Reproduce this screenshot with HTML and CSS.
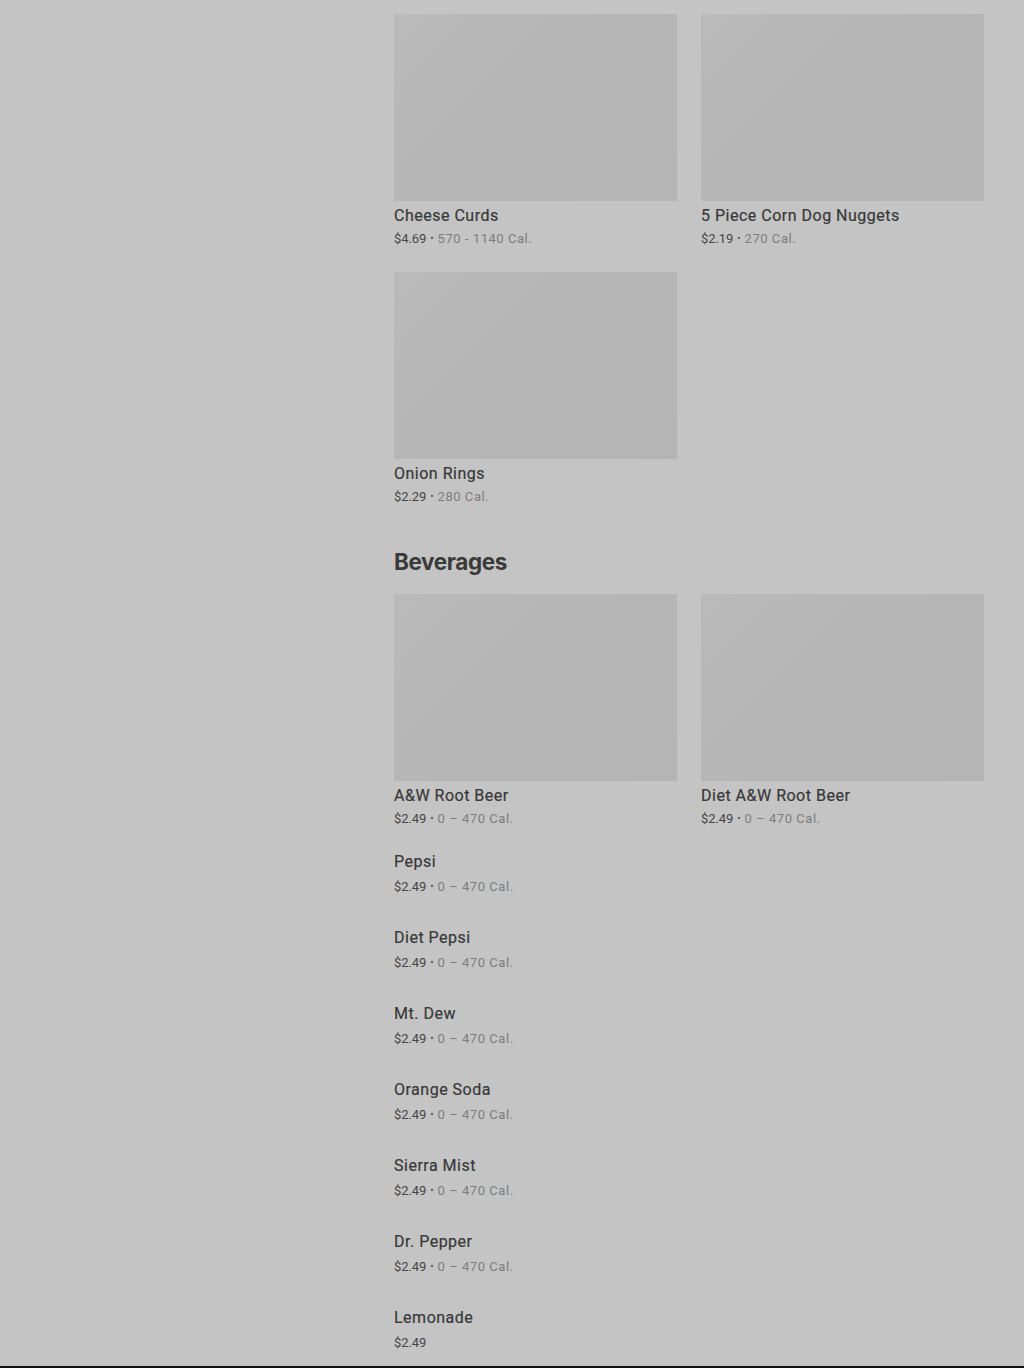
FILE: index.html
```html
<!DOCTYPE html>
<html lang="en">
<head>
<meta charset="utf-8">
<title>Menu</title>
<link rel="stylesheet" href="styles.css">
</head>
<body>
<div class="page">
  <aside class="side"></aside>
  <main class="menu">
    <section class="section">
      <div class="grid">
        <div class="card">
          <div class="thumb"></div>
          <div class="name">Cheese Curds</div>
          <div class="meta"><span class="price">$4.69</span><span class="dot">•</span><span class="cal">570 - 1140 Cal.</span></div>
        </div>
        <div class="card">
          <div class="thumb"></div>
          <div class="name">5 Piece Corn Dog Nuggets</div>
          <div class="meta"><span class="price">$2.19</span><span class="dot">•</span><span class="cal">270 Cal.</span></div>
        </div>
        <div class="card">
          <div class="thumb"></div>
          <div class="name">Onion Rings</div>
          <div class="meta"><span class="price">$2.29</span><span class="dot">•</span><span class="cal">280 Cal.</span></div>
        </div>
      </div>
    </section>
    <section class="section">
      <h2 class="heading">Beverages</h2>
      <div class="grid">
        <div class="card">
          <div class="thumb"></div>
          <div class="name">A&amp;W Root Beer</div>
          <div class="meta"><span class="price">$2.49</span><span class="dot">•</span><span class="cal">0 – 470 Cal.</span></div>
        </div>
        <div class="card">
          <div class="thumb"></div>
          <div class="name">Diet A&amp;W Root Beer</div>
          <div class="meta"><span class="price">$2.49</span><span class="dot">•</span><span class="cal">0 – 470 Cal.</span></div>
        </div>
      </div>
      <ul class="list">
        <li class="row"><div class="name">Pepsi</div><div class="meta row-meta"><span class="price">$2.49</span><span class="dot">•</span><span class="cal">0 – 470 Cal.</span></div></li>
        <li class="row"><div class="name">Diet Pepsi</div><div class="meta row-meta"><span class="price">$2.49</span><span class="dot">•</span><span class="cal">0 – 470 Cal.</span></div></li>
        <li class="row"><div class="name">Mt. Dew</div><div class="meta row-meta"><span class="price">$2.49</span><span class="dot">•</span><span class="cal">0 – 470 Cal.</span></div></li>
        <li class="row"><div class="name">Orange Soda</div><div class="meta row-meta"><span class="price">$2.49</span><span class="dot">•</span><span class="cal">0 – 470 Cal.</span></div></li>
        <li class="row"><div class="name">Sierra Mist</div><div class="meta row-meta"><span class="price">$2.49</span><span class="dot">•</span><span class="cal">0 – 470 Cal.</span></div></li>
        <li class="row"><div class="name">Dr. Pepper</div><div class="meta row-meta"><span class="price">$2.49</span><span class="dot">•</span><span class="cal">0 – 470 Cal.</span></div></li>
        <li class="row"><div class="name">Lemonade</div><div class="meta row-meta"><span class="price">$2.49</span></div></li>
      </ul>
    </section>
  </main>
</div>
<div class="bottom-bar"></div>
</body>
</html>
```
FILE: styles.css
```css
* { box-sizing: border-box; }
html, body { margin: 0; padding: 0; }
body {
  background: #c4c4c4;
  font-family: Roboto, "Liberation Sans", Arial, sans-serif;
  color: #3c3c3c;
}
.page {
  display: flex;
  padding: 14px 40px 0 0;
}
.side { width: 394px; flex: none; }
.menu { flex: 1; min-width: 0; }
.grid {
  display: grid;
  grid-template-columns: 283px 283px;
  column-gap: 24px;
  row-gap: 24px;
}
.thumb {
  height: 187px;
  background: linear-gradient(135deg, #bababa 0%, #b6b6b6 40%, #b4b4b4 100%);
}
.name {
  margin-top: 5px;
  font-size: 16px;
  line-height: 20px;
  font-weight: 400;
  color: #383838;
  letter-spacing: 0.5px;
  -webkit-text-stroke: 0.2px #383838;
}
.meta {
  margin-top: 4px;
  font-size: 13px;
  line-height: 18px;
  display: flex;
  align-items: center;
}
.price { color: #464646; letter-spacing: -0.1px; }
.dot { color: #555; font-size: 10px; margin: 0 4px; }
.cal { color: #7d7d7d; letter-spacing: 0.55px; }
.heading {
  margin: 40px 0 16px;
  font-family: Inter, "Noto Sans", sans-serif;
  font-size: 22.5px;
  line-height: 32px;
  font-weight: 700;
  letter-spacing: -0.4px;
  color: #3a3a3a;
}
.list {
  list-style: none;
  margin: 24px 0 0;
  padding: 0;
}
.row { height: 76px; }
.row .name { margin-top: 0; }
.row-meta { margin-top: 6px; }
.bottom-bar {
  position: fixed;
  left: 0; right: 0; bottom: 0;
  height: 2px;
  background: #111;
}
```
